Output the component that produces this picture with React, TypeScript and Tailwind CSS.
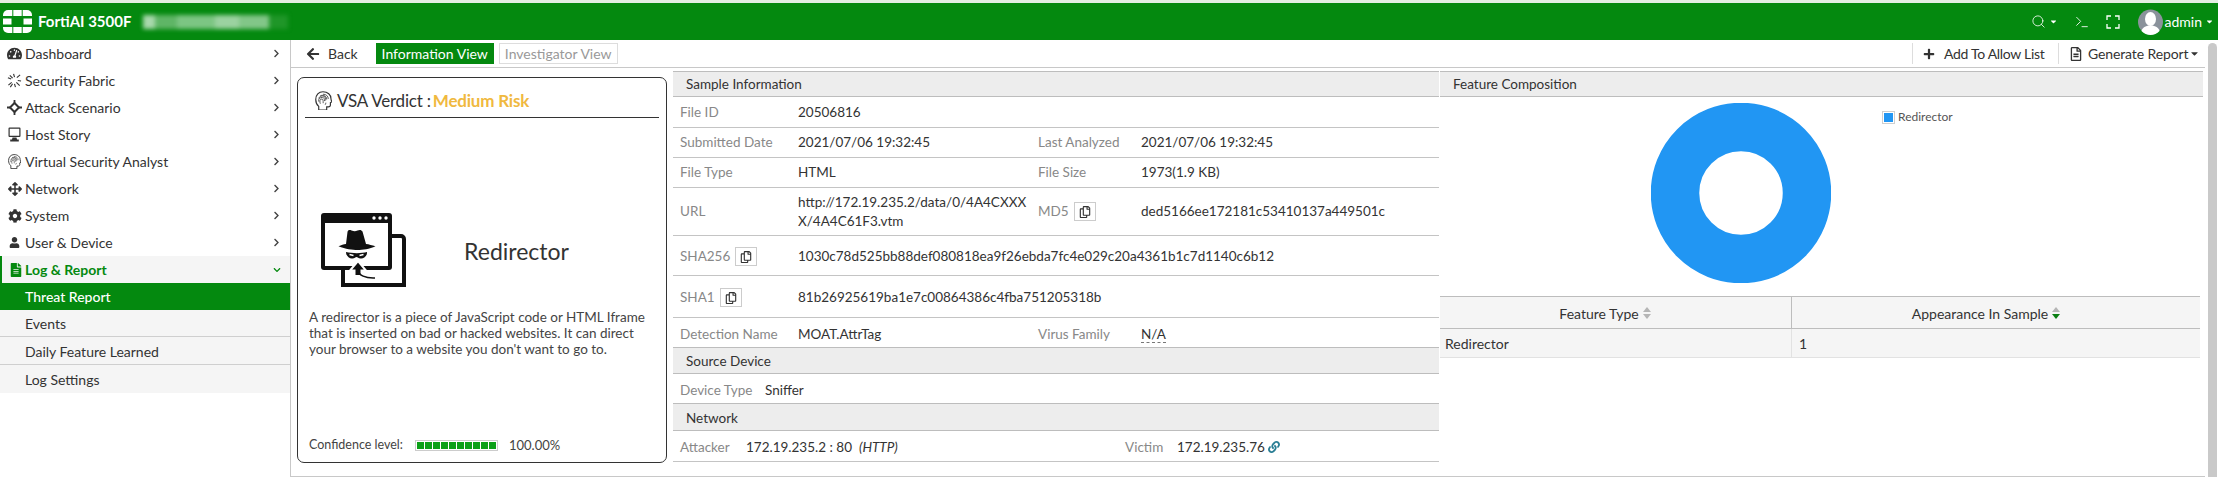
import React from "react";
import {
  FaTachometerAlt, FaArrowsAlt, FaCog, FaUser, FaFileAlt, FaArrowLeft, FaPlus, FaRegCopy, FaRegFileAlt, FaCaretDown, FaChevronRight, FaChevronDown, FaLink,
} from "react-icons/fa";
import { Search, Terminal } from "lucide-react";

function Logo() {
  return (
    <svg width="29" height="23" viewBox="0 0 29 23" fill="#fff">
      <path d="M5 0h4.300v6H0V5a5 5 0 0 1 5-5z" />
      <rect x="10.300" y="0" width="8.400" height="6" />
      <path d="M19.700 0H24a5 5 0 0 1 5 5v1h-9.300z" />
      <rect x="0" y="8.500" width="8.500" height="6" />
      <rect x="20.500" y="8.500" width="8.500" height="6" />
      <path d="M0 17h9.300v6H5a5 5 0 0 1-5-5z" />
      <rect x="10.300" y="17" width="8.400" height="6" />
      <path d="M19.700 17H29v1a5 5 0 0 1-5 5h-4.300z" />
    </svg>
  );
}

function FabricIcon() {
  return (
    <svg width="15" height="15" viewBox="0 0 16 16" stroke="#333" strokeWidth="1.200" fill="none">
      <path d="M7 1l1 3.500M14 2l-3.500 3M1 5l3.500 1.500M15 8.500l-3.500-.5M1.500 13l3.500-3M8 11.500L9 15M3 2.500l3 3M10 10l3.500 3.500M3.500 15L6 11.500" />
    </svg>
  );
}

function AttackIcon() {
  return (
    <svg width="15" height="15" viewBox="0 0 15 15" fill="none" stroke="#333">
      <path d="M7.500 3 12 7.500 7.500 12 3 7.500z" strokeWidth="2" strokeLinejoin="round" />
      <path d="M7.500 0v3M7.500 12v3M0 7.500h3M12 7.500h3" strokeWidth="1.800" />
    </svg>
  );
}

function HostIcon() {
  return (
    <svg width="15" height="15" viewBox="0 0 15 15" fill="#333">
      <path d="M2.500.5h10a1 1 0 0 1 1 1V9a1 1 0 0 1-1 1h-10a1 1 0 0 1-1-1V1.500a1 1 0 0 1 1-1zm.2 1.200v7.100h9.600V1.700z" fillRule="evenodd" />
      <path d="M5.500 10.500h4l.5 2h1.800v2H3.200v-2H5z" />
    </svg>
  );
}

function BrainIcon({ size = 15 }: { size?: number }) {
  return (
    <svg width={size} height={size * 1.150} viewBox="0 0 16 18.400" fill="none" stroke="#333" strokeWidth="1.100">
      <path d="M7.500.7c4.500 0 7.500 2.800 7.500 6.300 0 1.200.6 2.500 1 3.200l-1.500.7v2.300c0 1-.9 1.700-2 1.700H11V18H3.500v-3.500C1.700 13 .7 10.600.7 8 .7 3.800 3.500.7 7.500.7z" />
      <path d="M7.500 3c3 0 5 1.800 5 4.500M5 4.500C7 3.500 11 4 11 8M3.500 7c.5-2 3-3 5-2 1.500.7 1.500 2.500 1.500 4M3.500 10c-.5-3 1.500-4 3.500-4 1.500 0 2 1.500 2 3.500M5 12c-.7-2-.7-4.500 1.500-4.500 1.200 0 1.200 1.800 1.200 4M9.500 13c.5-.5.700-1 .7-2" strokeWidth="0.750" />
    </svg>
  );
}

function HackerWindows() {
  return (
    <svg width="86" height="75" viewBox="0 0 86 75">
      <path d="M22 26V72h61V26a3 3 0 0 0-3-3H22z" fill="#fff" stroke="#111" strokeWidth="4" />
      <rect x="0" y="0" width="71" height="57" rx="3" fill="#111" />
      <rect x="4" y="10" width="63" height="43" fill="#fff" />
      <circle cx="53" cy="5" r="1.700" fill="#fff" />
      <circle cx="59" cy="5" r="1.700" fill="#fff" />
      <circle cx="65" cy="5" r="1.700" fill="#fff" />
      <path d="M25 31l1.500-12c.4-2 2-2.500 4-1.500 2.500 1 4 1 6 0 2-1 4-.8 5 1l3.500 12.500c3 .3 6 1.300 9.500 2.300-6 3-13 3.700-18 3.700s-12-.7-19-3.700c3-1.100 5-2 7.500-2.300z" fill="#111" />
      <path d="M25 39c6 1.500 16 1.500 21 0 .5 4-3.500 7-6.500 6.500-2-.3-3-1.500-4-1.500s-2 1.200-4 1.500c-3 .5-6.500-2.500-6.500-6.500z" fill="#111" />
      <path d="M28.500 41.500l4 1M42.500 41.500l-4 1" stroke="#fff" strokeWidth="1.300" />
      <path d="M37 48L29 57.500h4.500V63h7v-5.500H45z" fill="#111" stroke="#fff" strokeWidth="2" />
      <path d="M37 58c1 4 7 7.500 17 7" fill="none" stroke="#111" strokeWidth="1.500" />
    </svg>
  );
}

function FullscreenIcon() {
  return (
    <svg width="14" height="14" viewBox="0 0 14 14" fill="none" stroke="#fff" strokeWidth="1.300">
      <path d="M1 5V1h4M9 1h4v4M13 9v4H9M5 13H1V9" />
    </svg>
  );
}

function Avatar() {
  return (
    <svg width="25" height="26" viewBox="0 0 25 26">
      <circle cx="12.500" cy="13" r="12.500" fill="#8a929b" />
      <ellipse cx="12.500" cy="10" rx="5.500" ry="7" fill="#fff" />
      <path d="M3.500 22c1-4 5-5.500 9-5.500s8 1.500 9 5.500c-2.500 2.500-5.500 4-9 4s-6.500-1.500-9-4z" fill="#fff" />
    </svg>
  );
}

const navTop: [React.ReactNode, string][] = [
  [<FaTachometerAlt size={15} />, "Dashboard"],
  [<FabricIcon />, "Security Fabric"],
  [<AttackIcon />, "Attack Scenario"],
  [<HostIcon />, "Host Story"],
  [<BrainIcon size={13} />, "Virtual Security Analyst"],
  [<FaArrowsAlt size={14} />, "Network"],
  [<FaCog size={14} />, "System"],
  [<FaUser size={11} />, "User & Device"],
];

function Sidebar() {
  return (
    <div className="w-[291px] shrink-0 border-r border-[#c8c8c8] text-[14px] text-[#333]">
      {navTop.map(([icon, label]) => (
        <div key={label} className="h-[27px] flex items-center pl-[6px] pr-[9px]">
          <span className="w-[19px] flex justify-center items-center -ml-[1px] mr-[1px]">{icon}</span>
          <span className="flex-1">{label}</span>
          <FaChevronRight size={9} className="text-[#444]" />
        </div>
      ))}
      <div className="h-[27px] flex items-center pl-[6px] pr-[9px] bg-[#f5f5f5] border-l-2 border-[#04890f] text-[#04890f] font-bold">
        <span className="w-[17px] flex justify-center -ml-[1px] mr-[1px]"><FaFileAlt size={14} /></span>
        <span className="flex-1">Log &amp; Report</span>
        <FaChevronDown size={8} />
      </div>
      <div className="h-[27px] flex items-center pl-[25px] bg-[#04890f] text-white font-medium">Threat Report</div>
      <div className="h-[27px] flex items-center pl-[25px] bg-[#f5f5f5] border-b border-[#cfcfcf]">Events</div>
      <div className="h-[28px] flex items-center pl-[25px] pt-[1px] bg-[#f5f5f5] border-b border-[#cfcfcf]">Daily Feature Learned</div>
      <div className="h-[28px] flex items-center pl-[25px] pt-[1px] bg-[#f5f5f5]">Log Settings</div>
    </div>
  );
}

function Toolbar() {
  return (
    <div className="h-[28px] shrink-0 flex items-center border-b border-[#c8c8c8] text-[14px] text-[#333]">
      <FaArrowLeft size={14} className="ml-[15px]" />
      <span className="ml-[8px]">Back</span>
      <span className="ml-[18px] w-[118px] h-[21px] flex items-center justify-center bg-[#04890f] text-white">Information View</span>
      <span className="ml-[5px] w-[119px] h-[21px] flex items-center justify-center border border-[#ddd] text-[#999]">Investigator View</span>
      <div className="ml-auto h-[21px] flex items-center border-l border-[#ddd] pl-[10px] w-[146px]">
        <FaPlus size={12} />
        <span className="ml-[9px] tracking-[-0.3px]">Add To Allow List</span>
      </div>
      <div className="h-[21px] flex items-center border-l border-[#ddd] pl-[10px] w-[147px]">
        <FaRegFileAlt size={14} />
        <span className="ml-[5px] tracking-[-0.12px]">Generate Report</span>
        <FaCaretDown size={11} className="ml-[1px]" />
      </div>
    </div>
  );
}

function VerdictCard() {
  return (
    <div className="w-[370px] shrink-0 ml-[6px] mt-[9px] mb-[13px] border border-[#333] rounded-[7px] px-[7px] flex flex-col text-[#333]">
      <div className="h-[40px] shrink-0 flex items-center border-b border-[#333] pl-[10px] pt-[6px] text-[17px]">
        <BrainIcon size={17} />
        <span className="ml-[5px] tracking-[-0.2px]">VSA Verdict :</span>
        <span className="ml-[2px] text-[#f0b93f] font-bold tracking-[-0.2px]">Medium Risk</span>
      </div>
      <div className="mt-[95px] flex items-center pl-[16px]">
        <HackerWindows />
        <span className="ml-[57px] pt-[2px] text-[23px] w-[105px] text-center whitespace-nowrap">Redirector</span>
      </div>
      <p className="mt-[21px] pl-[4px] pr-[2px] text-[13.500px] leading-[16px] text-[#444]">
        A redirector is a piece of JavaScript code or HTML Iframe that is inserted on bad or hacked websites. It can direct your browser to a website you don't want to go to.
      </p>
      <div className="mt-auto mb-[7px] flex items-center pl-[4px] text-[12.500px] text-[#444]">
        <span>Confidence level:</span>
        <span className="ml-[12px] w-[83px] h-[11px] border border-[#ccc] flex gap-[1px] px-[1px] py-[1px]">
          {Array.from({ length: 10 }).map((_, i) => (
            <span key={i} className="flex-1 bg-[#0ca018]" />
          ))}
        </span>
        <span className="ml-[11px] text-[13px]">100.00%</span>
      </div>
    </div>
  );
}

function Band({ children, h, pt = "pt-[1px]" }: { children: React.ReactNode; h: string; pt?: string }) {
  return (
    <div className={`${h} ${pt} flex items-center pl-[13px] bg-[#ededed] border-y border-[#bdbdbd] text-[#333]`}>{children}</div>
  );
}

function Copy() {
  return (
    <span className="ml-[5px] w-[22px] h-[19px] inline-flex items-center justify-center border border-[#ccc]">
      <FaRegCopy size={12} className="text-[#333]" />
    </span>
  );
}

function L({ children, w }: { children: React.ReactNode; w: string }) {
  return <span className={`${w} shrink-0 flex items-center text-[#888]`}>{children}</span>;
}

function Row({ children, h, line = true, pt = "" }: { children: React.ReactNode; h: string; line?: boolean; pt?: string }) {
  return <div className={`${h} ${pt} flex items-center pl-[7px] ${line ? "border-b border-[#c4c4c4]" : ""}`}>{children}</div>;
}

function SamplePanel() {
  return (
    <div className="w-[766px] shrink-0 ml-[6px] mt-[3px] text-[13.500px] text-[#333]">
      <Band h="h-[26px]">Sample Information</Band>
      <Row h="h-[31px]"><L w="w-[118px]">File ID</L>20506816</Row>
      <Row h="h-[30px]"><L w="w-[118px]">Submitted Date</L><span className="w-[240px]">2021/07/06 19:32:45</span><L w="w-[103px]">Last Analyzed</L>2021/07/06 19:32:45</Row>
      <Row h="h-[30px]"><L w="w-[118px]">File Type</L><span className="w-[240px]">HTML</span><L w="w-[103px]">File Size</L>1973(1.9 KB)</Row>
      <Row h="h-[48px]">
        <L w="w-[118px]">URL</L>
        <span className="w-[240px] pr-[6px] break-all leading-[19px]">http://172.19.235.2/data/0/4A4CXXXX/4A4C61F3.vtm</span>
        <L w="w-[103px]">MD5<Copy /></L>ded5166ee172181c53410137a449501c
      </Row>
      <Row h="h-[40px]" pt="pt-[2px]"><L w="w-[118px]">SHA256<Copy /></L>1030c78d525bb88def080818ea9f26ebda7fc4e029c20a4361b1c7d1140c6b12</Row>
      <Row h="h-[42px]" pt="pt-[2px]"><L w="w-[118px]">SHA1<Copy /></L>81b26925619ba1e7c00864386c4fba751205318b</Row>
      <Row h="h-[29px]" line={false} pt="pt-[3px]"><L w="w-[118px]">Detection Name</L><span className="w-[240px]">MOAT.AttrTag</span><L w="w-[103px]">Virus Family</L><span className="border-b border-dashed border-[#777] leading-[16px]">N/A</span></Row>
      <Band h="h-[27px]" pt="pt-[2px]">Source Device</Band>
      <Row h="h-[29px]" line={false} pt="pt-[3px]"><L w="w-[85px]">Device Type</L>Sniffer</Row>
      <Band h="h-[28px]" pt="pt-[2px]">Network</Band>
      <Row h="h-[31px]" pt="pt-[2px]">
        <L w="w-[66px]">Attacker</L>
        <span className="w-[379px]">172.19.235.2 : 80 &nbsp;<i>(HTTP)</i></span>
        <L w="w-[52px]">Victim</L>172.19.235.76
        <FaLink size={12} className="ml-[3px] text-[#2b7f95]" />
      </Row>
    </div>
  );
}

function SortIcon({ active }: { active?: boolean }) {
  return (
    <svg width="8" height="12" viewBox="0 0 8 12" className="ml-[4px] shrink-0">
      <path d="M4 0l4 5H0z" fill="#b5b5b5" />
      <path d="M0 7h8l-4 5z" fill={active ? "#0a7f12" : "#b5b5b5"} />
    </svg>
  );
}

function FeaturePanel() {
  return (
    <div className="flex-1 min-w-0 ml-[1px] mr-[2px] mt-[3px] text-[13.500px] text-[#333]">
      <div className="h-[26px] flex items-center pl-[13px] pt-[1px] bg-[#ededed] border-y border-[#bdbdbd]">Feature Composition</div>
      <div className="h-[199px] flex items-start pt-[6px] pl-[211px]">
        <svg width="180" height="180" viewBox="0 0 180 180">
          <circle cx="90" cy="90" r="66" fill="none" stroke="#2196f3" strokeWidth="48.500" />
        </svg>
        <div className="ml-[51px] mt-[5px] flex items-center text-[12px] text-[#555]">
          <span className="w-[13px] h-[13px] border border-[#cfcfcf] p-[1px] flex"><span className="flex-1 bg-[#2196f3]" /></span>
          <span className="ml-[3px]">Redirector</span>
        </div>
      </div>
      <div className="mr-[3px] border-t border-[#bdbdbd] bg-[#f5f5f5] text-[14px]">
        <div className="h-[32px] flex border-b border-[#bdbdbd]">
          <div className="w-[352px] border-r border-[#bdbdbd] flex items-center justify-center pt-[1px] pr-[21px]">Feature Type<SortIcon /></div>
          <div className="flex-1 flex items-center justify-center pt-[1px] pr-[20px]">Appearance In Sample<SortIcon active /></div>
        </div>
        <div className="h-[29px] flex border-b border-[#e2e2e2] items-center">
          <div className="w-[352px] h-full border-r border-[#e2e2e2] flex items-center pl-[5px] pt-[1px]">Redirector</div>
          <div className="pl-[7px] pt-[1px]">1</div>
        </div>
      </div>
    </div>
  );
}

export default function App() {
  return (
    <div className="w-[2218px] h-[477px] overflow-hidden bg-white flex flex-col font-['Lato',sans-serif]">
      <div className="h-[3px] shrink-0 bg-[#e3efe3]" />
      <div className="h-[37px] shrink-0 bg-[#04890f] flex items-center text-white">
        <span className="ml-[3px] flex"><Logo /></span>
        <span className="ml-[6px] text-[15px] font-bold">FortiAI 3500F</span>
        <span className="ml-[12px] w-[145px] h-[14px] blur-[2px] flex" aria-hidden="true">
          <span className="w-[12px] bg-[#a8d8ac]" />
          <span className="w-[22px] bg-[#5fb566]" />
          <span className="w-[38px] bg-[#7cc583]" />
          <span className="w-[24px] bg-[#9bd2a0]" />
          <span className="w-[30px] bg-[#82c688]" />
          <span className="flex-1 bg-[#1f9628]" />
        </span>
        <div className="ml-auto flex items-center text-[14px]">
          <Search size={15} strokeWidth={1.300} />
          <FaCaretDown size={9} className="ml-[3px]" />
          <Terminal size={16} strokeWidth={1.300} className="ml-[16px]" />
          <span className="ml-[16px] flex"><FullscreenIcon /></span>
          <span className="ml-[18px] flex"><Avatar /></span>
          <span className="ml-[2px]">admin</span>
          <FaCaretDown size={9} className="ml-[3px] mr-[4px]" />
        </div>
      </div>
      <div className="flex-1 flex min-h-0">
        <Sidebar />
        <div className="flex-1 min-w-0 flex flex-col border-b border-[#c8c8c8]">
          <Toolbar />
          <div className="flex-1 flex min-h-0">
            <VerdictCard />
            <SamplePanel />
            <FeaturePanel />
          </div>
        </div>
        <div className="w-[13px] shrink-0 pt-[3px] pl-[3px] pr-[1px]">
          <div className="h-full rounded-t-[5px] bg-[#c9c9c9]" />
        </div>
      </div>
    </div>
  );
}
